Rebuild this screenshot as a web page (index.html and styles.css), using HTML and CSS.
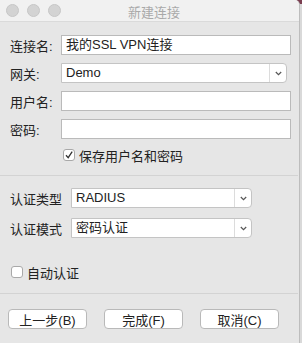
FILE: index.html
```html
<!DOCTYPE html>
<html lang="zh-CN">
<head>
    <meta charset="UTF-8" />
    <title>新建连接</title>
    <link rel="stylesheet" href="styles.css">
</head>
<body>
    <div class="window">
        <div class="titlebar">
            <div class="lights">
                <span class="light"></span>
                <span class="light"></span>
                <span class="light"></span>
            </div>
            <p class="title">新建连接</p>
        </div>

        <section class="account">
            <div class="row">
                <p class="label">连接名:</p>
                <div class="input">我的SSL VPN连接</div>
            </div>
            <div class="row">
                <p class="label">网关:</p>
                <div class="select gateway">
                    <span class="select-value">Demo</span>
                    <span class="select-arrow"><svg width="7" height="5" viewBox="0 0 7 5"><path d="M0.8 1 L3.5 3.6 L6.2 1" fill="none" stroke="#555" stroke-width="1.2"/></svg></span>
                </div>
            </div>
            <div class="row">
                <p class="label">用户名:</p>
                <div class="input"></div>
            </div>
            <div class="row">
                <p class="label">密码:</p>
                <div class="input"></div>
            </div>
            <div class="check save">
                <span class="box"><svg width="10" height="10" viewBox="0 0 10 10"><path d="M2 5.2 L4.2 7.6 L8.2 1.6" fill="none" stroke="#333" stroke-width="1.3"/></svg></span>
                <span>保存用户名和密码</span>
            </div>
        </section>

        <hr class="divider">

        <section class="auth">
            <div class="row">
                <p class="label wide">认证类型</p>
                <div class="select auth-select">
                    <span class="select-value">RADIUS</span>
                    <span class="select-arrow"><svg width="7" height="5" viewBox="0 0 7 5"><path d="M0.8 1 L3.5 3.6 L6.2 1" fill="none" stroke="#555" stroke-width="1.2"/></svg></span>
                </div>
            </div>
            <div class="row">
                <p class="label wide">认证模式</p>
                <div class="select auth-select">
                    <span class="select-value">密码认证</span>
                    <span class="select-arrow"><svg width="7" height="5" viewBox="0 0 7 5"><path d="M0.8 1 L3.5 3.6 L6.2 1" fill="none" stroke="#555" stroke-width="1.2"/></svg></span>
                </div>
            </div>
            <div class="check auto">
                <span class="box"></span>
                <span>自动认证</span>
            </div>
        </section>

        <hr class="divider">

        <div class="buttons">
            <button>上一步(B)</button>
            <button>完成(F)</button>
            <button>取消(C)</button>
        </div>
    </div>
</body>
</html>
```

FILE: styles.css
```css
html,
body {
    margin: 0;
    height: 100%;
}
body {
    background: linear-gradient(#7a3e50 0 4px, #d9d9d9 4px);
    font-family: "Liberation Sans", "Noto Sans CJK SC", sans-serif;
    font-size: 13px;
    color: #222;
}
p {
    margin: 0;
}
.window {
    width: 299px;
    height: 343px;
    background: #e6e6e6;
    border-right: 1px solid #bdbdbd;
    border-top-right-radius: 5px;
    overflow: hidden;
}
.titlebar {
    height: 21px;
    background: #f1f1f1;
    border-bottom: 1px solid #dadada;
    display: flex;
    align-items: center;
}
.lights {
    display: flex;
    gap: 8px;
    padding-left: 6px;
}
.light {
    width: 11px;
    height: 11px;
    border-radius: 50%;
    background: #d3d3d3;
    border: 0.5px solid #c6c6c6;
}
.title {
    flex: 1;
    text-align: center;
    color: #a9a9a9;
    margin-right: 52px;
    padding-top: 1px;
}
.account,
.auth {
    display: flex;
    flex-direction: column;
    padding-left: 10px;
}
.account {
    padding-top: 13px;
    gap: 8px;
}
.auth {
    padding-top: 12px;
    gap: 10px;
}
.row {
    display: flex;
    align-items: center;
    height: 20px;
}
.label {
    width: 51px;
    white-space: nowrap;
}
.label.wide {
    width: 61px;
}
.input {
    box-sizing: border-box;
    width: 230px;
    height: 20px;
    background: #fff;
    border: 1px solid #bababa;
    padding-left: 4px;
    line-height: 18px;
}
.select {
    box-sizing: border-box;
    height: 20px;
    display: flex;
    background: #fff;
    border: 1px solid #c4c4c4;
    border-radius: 0 4px 4px 0;
}
.gateway {
    width: 226px;
}
.auth-select {
    width: 181px;
}
.select-value {
    flex: 1;
    padding-left: 4px;
    line-height: 18px;
}
.select-arrow {
    width: 16px;
    border-left: 1px solid #dcdcdc;
    display: flex;
    align-items: center;
    justify-content: center;
}
.check {
    display: flex;
    align-items: center;
    gap: 4px;
    height: 16px;
}
.save {
    margin-left: 53px;
}
.auto {
    margin-top: 16px;
    margin-left: 1px;
}
.box {
    box-sizing: border-box;
    width: 12px;
    height: 12px;
    background: #fff;
    border: 1px solid #a9a9a9;
    border-radius: 3px;
    display: flex;
    align-items: center;
    justify-content: center;
}
.divider {
    margin: 12px 0 0;
    border: 0;
    border-top: 1px solid #d3d3d3;
    width: 298px;
}
.auth + .divider {
    margin-top: 13px;
}
.buttons {
    display: flex;
    gap: 17px;
    padding: 15px 0 0 8px;
}
button {
    width: 79px;
    height: 20px;
    padding: 0;
    background: #fff;
    border: 1px solid #b9b9b9;
    border-radius: 4px;
    font-family: inherit;
    font-size: 13px;
    color: #222;
}
```
